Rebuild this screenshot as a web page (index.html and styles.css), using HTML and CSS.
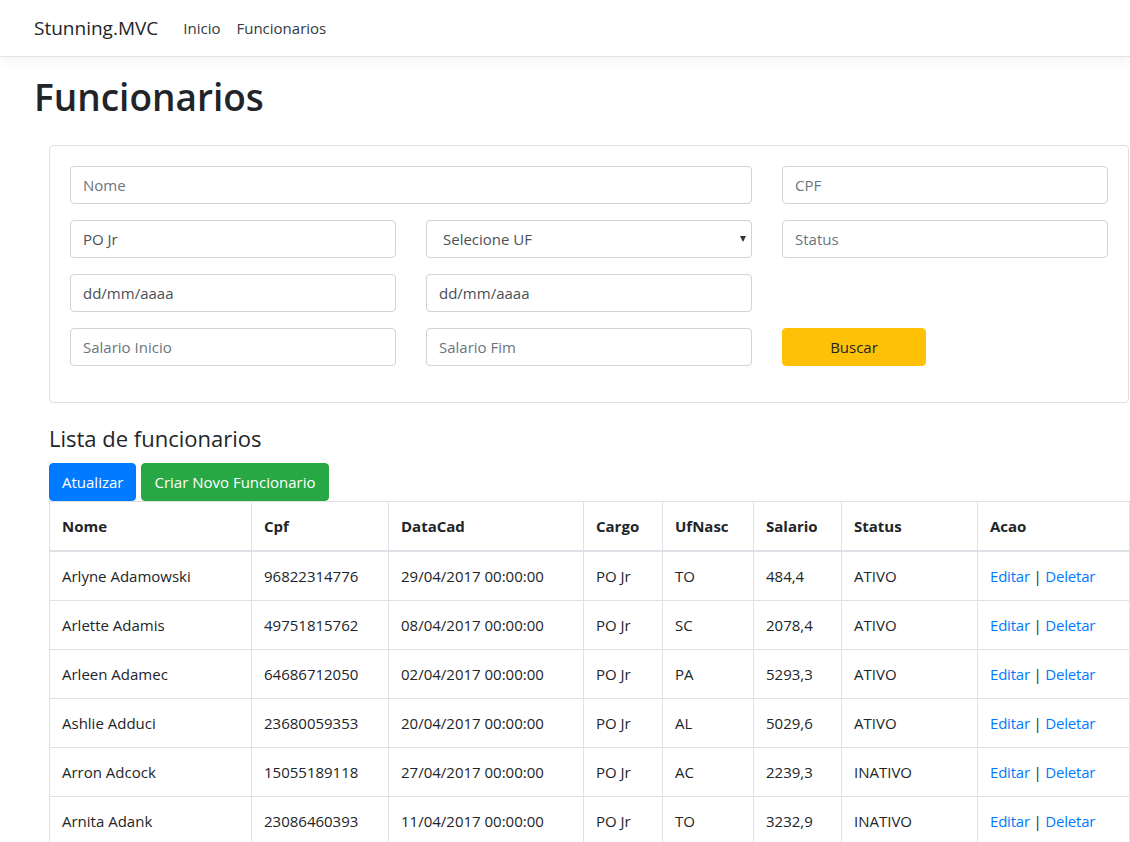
FILE: index.html
```html
<!DOCTYPE html>
<html lang="pt">
<head>
<meta charset="utf-8">
<title>Funcionarios - Stunning.MVC</title>
<link rel="stylesheet" href="styles.css">
</head>
<body>
<header class="navbar">
  <a class="brand" href="#">Stunning.MVC</a>
  <nav class="nav-links">
    <a href="#">Inicio</a>
    <a href="#">Funcionarios</a>
  </nav>
</header>
<main class="main">
  <h1 class="title">Funcionarios</h1>
  <section class="content">
    <form class="card">
      <div class="filters">
        <input class="field span2" type="text" placeholder="Nome">
        <input class="field" type="text" placeholder="CPF">
        <input class="field" type="text" value="PO Jr">
        <div class="select-wrap">
          <select class="field select"><option>Selecione UF</option></select>
          <span class="caret"></span>
        </div>
        <input class="field" type="text" placeholder="Status">
        <input class="field" type="text" value="dd/mm/aaaa">
        <input class="field" type="text" value="dd/mm/aaaa">
        <div></div>
        <input class="field" type="text" placeholder="Salario Inicio">
        <input class="field" type="text" placeholder="Salario Fim">
        <div><button type="button" class="btn btn-warning">Buscar</button></div>
      </div>
    </form>
    <h4 class="list-title">Lista de funcionarios</h4>
    <div class="actions">
      <button type="button" class="btn btn-primary">Atualizar</button>
      <button type="button" class="btn btn-success">Criar Novo Funcionario</button>
    </div>
    <table class="table">
      <colgroup>
        <col class="c-nome"><col class="c-cpf"><col class="c-data"><col class="c-cargo"><col class="c-uf"><col class="c-sal"><col class="c-status"><col class="c-acao">
      </colgroup>
      <thead>
        <tr><th>Nome</th><th>Cpf</th><th>DataCad</th><th>Cargo</th><th>UfNasc</th><th>Salario</th><th>Status</th><th>Acao</th></tr>
      </thead>
      <tbody>
        <tr><td>Arlyne Adamowski</td><td>96822314776</td><td>29/04/2017 00:00:00</td><td>PO Jr</td><td>TO</td><td>484,4</td><td>ATIVO</td><td><a href="#">Editar</a> | <a href="#">Deletar</a></td></tr>
        <tr><td>Arlette Adamis</td><td>49751815762</td><td>08/04/2017 00:00:00</td><td>PO Jr</td><td>SC</td><td>2078,4</td><td>ATIVO</td><td><a href="#">Editar</a> | <a href="#">Deletar</a></td></tr>
        <tr><td>Arleen Adamec</td><td>64686712050</td><td>02/04/2017 00:00:00</td><td>PO Jr</td><td>PA</td><td>5293,3</td><td>ATIVO</td><td><a href="#">Editar</a> | <a href="#">Deletar</a></td></tr>
        <tr><td>Ashlie Adduci</td><td>23680059353</td><td>20/04/2017 00:00:00</td><td>PO Jr</td><td>AL</td><td>5029,6</td><td>ATIVO</td><td><a href="#">Editar</a> | <a href="#">Deletar</a></td></tr>
        <tr><td>Arron Adcock</td><td>15055189118</td><td>27/04/2017 00:00:00</td><td>PO Jr</td><td>AC</td><td>2239,3</td><td>INATIVO</td><td><a href="#">Editar</a> | <a href="#">Deletar</a></td></tr>
        <tr><td>Arnita Adank</td><td>23086460393</td><td>11/04/2017 00:00:00</td><td>PO Jr</td><td>TO</td><td>3232,9</td><td>INATIVO</td><td><a href="#">Editar</a> | <a href="#">Deletar</a></td></tr>
      </tbody>
    </table>
  </section>
</main>
</body>
</html>
```

FILE: styles.css
```css
* { box-sizing: border-box; }
html, body { margin: 0; padding: 0; }
body {
  font-family: "Open Sans", "Noto Sans", "Liberation Sans", sans-serif;
  font-size: 15px;
  line-height: 24px;
  color: #212529;
  background: #fff;
  overflow-x: hidden;
}
a { text-decoration: none; }

.navbar {
  height: 57px;
  display: flex;
  align-items: center;
  padding: 0 16px 0 34px;
  background: #fff;
  border-bottom: 1px solid #e3e3e3;
  box-shadow: 0 4px 12px rgba(0,0,0,0.05);
}
.brand {
  color: #212529;
  font-size: 19px;
  line-height: 30px;
  margin-right: 17px;
  padding-bottom: 1px;
}
.nav-links { display: flex; }
.nav-links a {
  color: #343a40;
  padding: 0 8px;
  font-size: 15px;
}

.main { padding: 0 0 0 34px; }
.title {
  margin: 16px 0 0;
  font-size: 37px;
  line-height: 48px;
  font-weight: 600;
  height: 48px;
}
.content {
  margin: 24px 0 0 15px;
  width: 1080px;
}

.card {
  border: 1px solid rgba(0,0,0,0.125);
  border-radius: 4px;
  padding: 20px 20px 36px;
  margin: 0;
}
.filters {
  display: grid;
  grid-template-columns: 326px 326px 326px;
  column-gap: 30px;
  row-gap: 16px;
}
.span2 { grid-column: span 2; }
.field {
  display: block;
  width: 100%;
  height: 38px;
  padding: 6px 12px;
  font-family: inherit;
  font-size: 15px;
  line-height: 24px;
  color: #495057;
  background: #fff;
  border: 1px solid #ced4da;
  border-radius: 4px;
  outline: none;
}
.field::placeholder { color: #6c757d; opacity: 1; }
.select-wrap { position: relative; }
.select {
  appearance: none;
  -webkit-appearance: none;
  padding-left: 16px;
}
.caret {
  position: absolute;
  right: 6px;
  top: 16px;
  width: 0;
  height: 0;
  border-left: 3.5px solid transparent;
  border-right: 3.5px solid transparent;
  border-top: 6px solid #333;
  pointer-events: none;
}

.btn {
  display: inline-block;
  height: 38px;
  padding: 6px 12px;
  font-family: inherit;
  font-size: 15px;
  line-height: 24px;
  border: 1px solid transparent;
  border-radius: 4px;
  color: #fff;
  cursor: pointer;
}
.btn-warning { background: #ffc107; border-color: #ffc107; color: #212529; width: 144px; }
.btn-primary { background: #007bff; border-color: #007bff; }
.btn-success { background: #28a745; border-color: #28a745; }

.list-title {
  margin: 21px 0 0;
  font-size: 22px;
  line-height: 29px;
  font-weight: 400;
}
.actions {
  display: flex;
  gap: 5px;
  margin-top: 10px;
  height: 38px;
}

.table {
  width: 1080px;
  border-collapse: collapse;
  table-layout: fixed;
  color: #212529;
}
.c-nome { width: 202px; }
.c-cpf { width: 137px; }
.c-data { width: 195px; }
.c-cargo { width: 79px; }
.c-uf { width: 91px; }
.c-sal { width: 88px; }
.c-status { width: 136px; }
.c-acao { width: 152px; }
.table th, .table td {
  border: 1px solid #dee2e6;
  padding: 12px;
  text-align: left;
  vertical-align: top;
  white-space: nowrap;
  line-height: 24px;
}
.table th { font-weight: 700; }
.table thead th { border-bottom: 2px solid #dee2e6; }
.table a { color: #007bff; }
.table td:last-child { letter-spacing: -0.2px; }
```
